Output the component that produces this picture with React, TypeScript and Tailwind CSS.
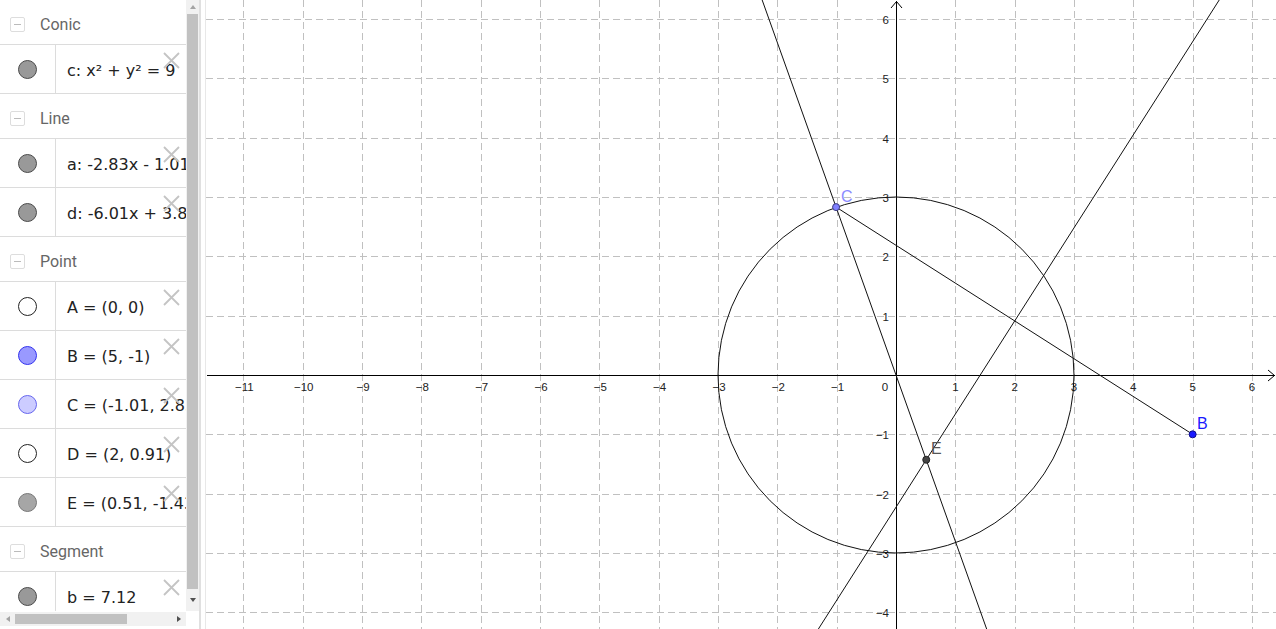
import React from "react";

const S = 59.33;
const OX = 690;
const OY = 375;
const W = 1070;
const H = 629;

const px = (u: number) => OX + u * S;
const py = (v: number) => OY - v * S;

type Row = { text: string; fill: string; stroke: string };
type Group = { title: string; rows: Row[] };

const groups: Group[] = [
  { title: "Conic", rows: [{ text: "c: x² + y² = 9", fill: "#999999", stroke: "#4a4a4a" }] },
  {
    title: "Line",
    rows: [
      { text: "a: -2.83x - 1.01y = 0", fill: "#999999", stroke: "#4a4a4a" },
      { text: "d: -6.01x + 3.83y = -8.53", fill: "#999999", stroke: "#4a4a4a" },
    ],
  },
  {
    title: "Point",
    rows: [
      { text: "A = (0, 0)", fill: "#ffffff", stroke: "#222222" },
      { text: "B = (5, -1)", fill: "#9999ff", stroke: "#3333ee" },
      { text: "C = (-1.01, 2.83)", fill: "#ccccff", stroke: "#6666ee" },
      { text: "D = (2, 0.91)", fill: "#ffffff", stroke: "#222222" },
      { text: "E = (0.51, -1.43)", fill: "#a6a6a6", stroke: "#777777" },
    ],
  },
  { title: "Segment", rows: [{ text: "b = 7.12", fill: "#999999", stroke: "#4a4a4a" }] },
];

function CloseX() {
  return (
    <svg className="absolute left-[163px] top-[7px]" width="17" height="17" viewBox="0 0 17 17">
      <path d="M1 1 L16 16 M16 1 L1 16" stroke="#c4c4c4" strokeWidth="1.8" fill="none" />
    </svg>
  );
}

function Header({ title }: { title: string }) {
  return (
    <div className="flex h-[45px] items-center border-b border-[#dcdcdc] pl-[10px] pt-[5px]">
      <div className="flex h-[15px] w-[15px] items-center justify-center rounded-[2px] border border-[#dddddd]">
        <div className="h-px w-[7px] bg-[#bbbbbb]" />
      </div>
      <span className="ml-[15px] text-[16px] text-[#666666] [font-family:Roboto,sans-serif]">{title}</span>
    </div>
  );
}

function ItemRow({ row }: { row: Row }) {
  return (
    <div className="relative flex h-[49px] shrink-0 border-b border-[#dcdcdc]">
      <div className="flex w-[56px] shrink-0 items-center justify-center border-r border-[#dcdcdc]">
        <div
          className="h-[19px] w-[19px] rounded-full border"
          style={{ background: row.fill, borderColor: row.stroke }}
        />
      </div>
      <div className="flex items-center overflow-hidden whitespace-nowrap pl-[11px] pt-[4px] text-[16px] text-[#222222] [font-family:'DejaVu_Sans',sans-serif]">
        {row.text}
      </div>
      <CloseX />
    </div>
  );
}

function AlgebraView() {
  return (
    <div className="flex w-[199px] shrink-0 flex-col">
      <div className="flex h-[611px]">
        <div className="w-[186px] overflow-hidden">
          {groups.map((g) => (
            <div key={g.title}>
              <Header title={g.title} />
              {g.rows.map((r) => (
                <ItemRow key={r.text} row={r} />
              ))}
            </div>
          ))}
        </div>
        <div className="flex w-[13px] flex-col items-center bg-[#f1f1f1]">
          <div className="flex h-[14px] items-center justify-center">
            <div className="h-0 w-0 border-x-[3.5px] border-b-[4px] border-x-transparent border-b-[#a3a3a3]" />
          </div>
          <div className="h-[575px] w-[11px] bg-[#c1c1c1]" />
          <div className="flex h-[22px] items-center justify-center">
            <div className="h-0 w-0 border-x-[3.5px] border-t-[4px] border-x-transparent border-t-[#505050]" />
          </div>
        </div>
      </div>
      <div className="flex h-[18px]">
        <div className="mt-[1px] flex h-[14px] w-[186px] items-center bg-[#f1f1f1]">
          <div className="flex w-[15px] justify-center">
            <div className="h-0 w-0 border-y-[3.5px] border-r-[4px] border-y-transparent border-r-[#a3a3a3]" />
          </div>
          <div className="h-[10px] w-[112px] bg-[#c1c1c1]" />
          <div className="ml-auto mr-[5px] h-0 w-0 border-y-[3.5px] border-l-[4px] border-y-transparent border-l-[#505050]" />
        </div>
        <div className="w-[13px] bg-white" />
      </div>
    </div>
  );
}

function Graph() {
  const xs: number[] = [];
  for (let k = -11; k <= 6; k++) xs.push(k);
  const ys: number[] = [];
  for (let k = -4; k <= 6; k++) ys.push(k);

  const C = { u: -1.01, v: 2.83 };
  const B = { u: 5, v: -1 };
  const E = { u: 0.5098, v: -1.4285 };

  const label = (k: number) => (k < 0 ? "\u2212" + Math.abs(k) : String(k));

  return (
    <svg width={W} height={H} className="block shrink-0" style={{ fontFamily: "'Liberation Sans', Arial, sans-serif" }}>
      {xs.map((k) =>
        k === 0 ? null : (
          <line
            key={"gx" + k}
            x1={Math.round(px(k)) + 0.5}
            y1={0}
            x2={Math.round(px(k)) + 0.5}
            y2={H}
            stroke="#c0c0c0"
            strokeDasharray="7 4"
          />
        )
      )}
      {ys.map((k) =>
        k === 0 ? null : (
          <line
            key={"gy" + k}
            x1={0}
            y1={Math.round(py(k)) + 0.5}
            x2={W}
            y2={Math.round(py(k)) + 0.5}
            stroke="#c0c0c0"
            strokeDasharray="7 4"
          />
        )
      )}

      {/* axes */}
      <line x1={1} y1={OY + 0.5} x2={W - 1} y2={OY + 0.5} stroke="#000" strokeWidth={1} />
      <path d={`M${W - 8} ${OY - 5} L${W - 1.5} ${OY + 0.5} L${W - 8} ${OY + 6}`} stroke="#000" fill="none" />
      <line x1={OX + 0.5} y1={1} x2={OX + 0.5} y2={H} stroke="#000" strokeWidth={1} />
      <path d={`M${OX - 5} ${8} L${OX + 0.5} ${1.5} L${OX + 6} ${8}`} stroke="#000" fill="none" />

      {/* axis labels */}
      {xs.map((k) =>
        k === 0 ? null : (
          <text key={"lx" + k} x={px(k) + (k < 0 ? 1 : 0)} y={391} fontSize={11.5} textAnchor="middle" fill="#222">
            {label(k)}
          </text>
        )
      )}
      <text x={OX - 11} y={391} fontSize={11.5} textAnchor="middle" fill="#222">
        0
      </text>
      {ys.map((k) =>
        k === 0 ? null : (
          <text key={"ly" + k} x={OX - 7} y={py(k) + 5} fontSize={11.5} textAnchor="end" fill="#222">
            {label(k)}
          </text>
        )
      )}

      {/* circle c */}
      <circle cx={px(0)} cy={py(0)} r={3 * S} stroke="#111" fill="none" strokeWidth={1} />

      {/* line a */}
      <line x1={px(-2.32)} y1={py(6.5)} x2={px(1.606)} y2={py(-4.5)} stroke="#111" strokeWidth={1} />
      {/* line d */}
      <line x1={px(5.562)} y1={py(6.5)} x2={px(-1.4476)} y2={py(-4.5)} stroke="#111" strokeWidth={1} />
      {/* segment b */}
      <line x1={px(C.u)} y1={py(C.v)} x2={px(B.u)} y2={py(B.v)} stroke="#111" strokeWidth={1} />

      {/* points */}
      <circle cx={px(C.u)} cy={py(C.v)} r={3.5} fill="#8080ff" stroke="#3a3a80" strokeWidth={1} />
      <circle cx={px(B.u)} cy={py(B.v)} r={3.5} fill="#1a1aff" stroke="#10108a" strokeWidth={1} />
      <circle cx={px(E.u)} cy={py(E.v)} r={3.5} fill="#444" stroke="#222" strokeWidth={1} />

      <text x={635} y={202} fontSize={16} fill="#8a8aff">
        C
      </text>
      <text x={991} y={429} fontSize={16} fill="#1a1aff">
        B
      </text>
      <text x={725} y={454} fontSize={16} fill="#555">
        E
      </text>
    </svg>
  );
}

export default function App() {
  return (
    <div className="flex h-[629px] w-[1276px] overflow-hidden bg-white">
      <AlgebraView />
      <div className="w-[7px] shrink-0 border-l-2 border-r border-l-[#e0e0e0] border-r-[#e8e8e8] bg-white" />
      <Graph />
    </div>
  );
}
